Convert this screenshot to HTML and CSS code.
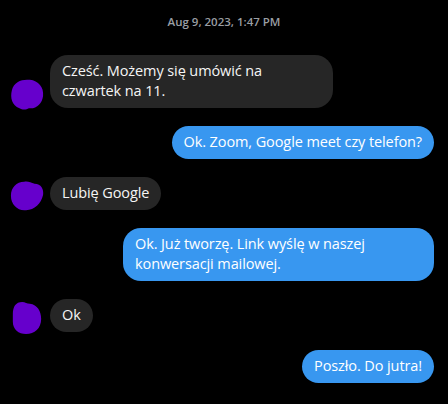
FILE: index.html
```html
<!DOCTYPE html>
<html>
<head>
<meta charset="utf-8">
<link rel="stylesheet" href="styles.css">
</head>
<body>
<div class="chat">
  <div class="time">Aug 9, 2023, 1:47 PM</div>
  <div class="row in">
    <svg class="avatar a1" viewBox="0 0 40 36"><path d="M4 14 C6 5 15 2 23 3 C32 4 38 11 37 20 C36 28 30 34 22 33 C19 35 15 35 12 33 C4 30 2 22 4 14 Z" fill="#6600cc"/></svg>
    <div class="bubble w-first">Cześć. Możemy się umówić na<br>czwartek na 11.</div>
  </div>
  <div class="row out">
    <div class="bubble">Ok. Zoom, Google meet czy telefon?</div>
  </div>
  <div class="row in">
    <svg class="avatar a2" viewBox="0 0 40 36"><path d="M3 18 C3 9 9 3 17 3 C21 2 24 4 28 5 C35 5 38 11 37 17 C35 26 28 33 19 33 C10 34 3 27 3 18 Z" fill="#6600cc"/></svg>
    <div class="bubble">Lubię Google</div>
  </div>
  <div class="row out">
    <div class="bubble w-second">Ok. Już tworzę. Link wyślę w naszej<br>konwersacji mailowej.</div>
  </div>
  <div class="row in">
    <svg class="avatar a3" viewBox="0 0 34 36"><path d="M2 14 C2 6 5 1 12 1 C15 1 17 3 20 3 C28 4 32 11 32 19 C32 29 25 35 16 35 C8 35 2 30 2 22 Z" fill="#6600cc"/></svg>
    <div class="bubble">Ok</div>
  </div>
  <div class="row out">
    <div class="bubble">Poszło. Do jutra!</div>
  </div>
</div>
</body>
</html>
```
FILE: styles.css
```css
html, body {
  margin: 0;
  padding: 0;
  background: #000;
}
body {
  width: 448px;
  height: 404px;
  overflow: hidden;
  font-family: "Open Sans", "Noto Sans", sans-serif;
  color: #f5f5f5;
}
.chat {
  display: flex;
  flex-direction: column;
  gap: 18px;
  padding: 14px 14px 0 8px;
}
.time {
  text-align: center;
  font-size: 11.5px;
  font-weight: 600;
  color: #9a9ea3;
  line-height: 16px;
  margin-left: 6px;
  margin-bottom: 7px;
}
.row {
  display: flex;
  align-items: flex-end;
}
.row.out {
  justify-content: flex-end;
}
.bubble {
  box-sizing: border-box;
  font-size: 14.5px;
  line-height: 20px;
  padding: 6px 12px 7px;
  border-radius: 17px;
  letter-spacing: -0.1px;
}
.bubble.w-first {
  width: 283px;
  border-radius: 18px;
}
.bubble.w-second {
  width: 311px;
  border-radius: 18px;
}
.in .bubble {
  background: #262626;
  margin-left: 4px;
}
.out .bubble {
  background: #3897f0;
  color: #fff;
}
.avatar {
  width: 38px;
  height: 34px;
  margin-bottom: -3px;
  flex: none;
}
```
